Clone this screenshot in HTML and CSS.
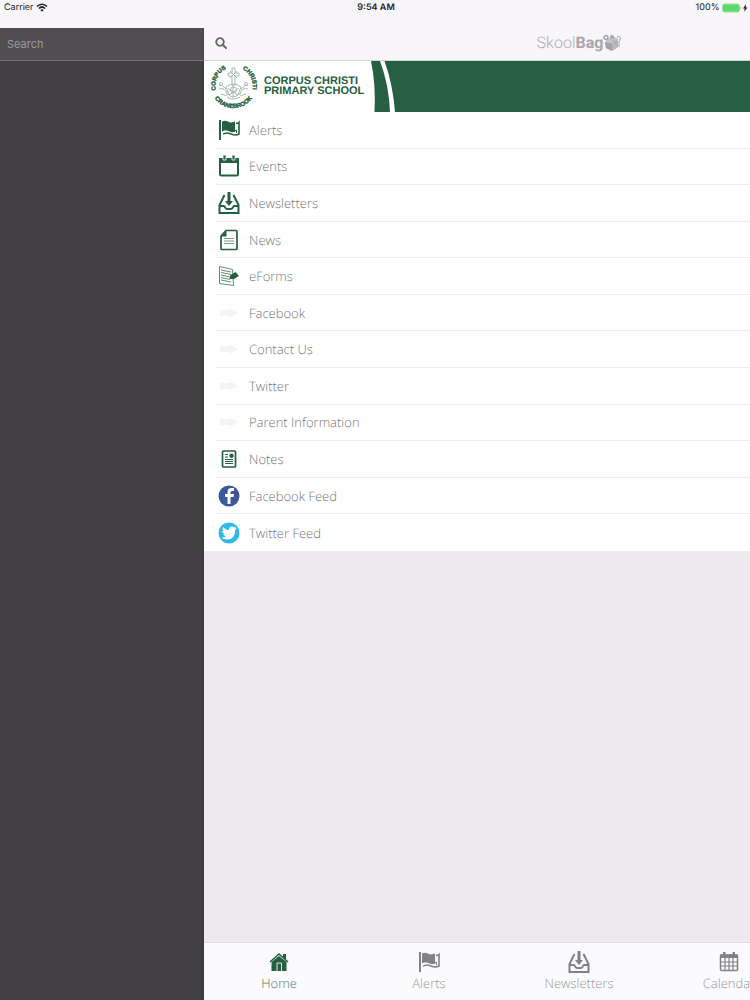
FILE: index.html
```html
<!DOCTYPE html>
<html lang="en">
<head>
    <meta charset="utf-8">
    <meta name="viewport" content="width=device-width, initial-scale=1">
    <title>SkoolBag</title>
    <link rel="stylesheet" href="styles.css">
</head>
<body>
<!-- shared icons -->
<svg class="sprite" aria-hidden="true">
    <symbol id="flag" viewBox="0 0 22 22">
        <path d="M1 1h2v20H1z" fill="currentColor"/>
        <path d="M4 2.500c4-2 6 1 9 1 2 0 3-1 4-1v10c-4 2-6-1-9-1-2 0-3 0-4 1z" fill="currentColor"/>
        <path d="M18 4.500c1 0 2 0 3-1v11.500c-5 3-8-1-12-1-2 0-3 1-4 1" fill="none" stroke="currentColor" stroke-width="1.600"/>
        <path d="M16 12.500 18.500 11v3" fill="none" stroke="currentColor"/>
    </symbol>
    <symbol id="tray" viewBox="0 0 22 22">
        <path d="M6.500 3 1.500 13v8h19v-8l-5-10M1.500 14H6c1 0 1 3 3 3h4c2 0 2-3 3-3h4.500" fill="none" stroke="currentColor" stroke-width="2"/>
        <path d="M9.500 0h3v9H15l-4 5-4-5h2.500z" fill="currentColor"/>
    </symbol>
    <symbol id="arrow" viewBox="0 0 22 22">
        <path d="M2 8h10V6l8 5-8 5v-2H2z" fill="currentColor"/>
    </symbol>
</svg>

<header class="status">
    <span class="carrier">Carrier
        <svg width="12" height="9" viewBox="0 0 12 9" aria-hidden="true"><path d="M1 3.500c3-3 7-3 10 0M3 5.500c2-2 4-2 6 0" fill="none" stroke="#222" stroke-width="1.700"/><path d="M4.300 7 6 8.800 7.700 7Q6 5.500 4.300 7z" fill="#222"/></svg>
    </span>
    <time class="clock">9:54 AM</time>
    <span class="power">100%
        <svg width="26" height="10" viewBox="0 0 26 10" aria-hidden="true"><rect x="0.500" y="1" width="17" height="8" rx="2" fill="#5fd86c" stroke="#9be3a4"/><path d="M18.500 3.500q2 1.500 0 3z" fill="#999"/><path d="M24 1 21 5.500h1.800L22 9l3.500-4.500h-1.800z" fill="#222"/></svg>
    </span>
</header>

<div class="app">
    <aside class="drawer">
        <input class="search" type="search" placeholder="Search" aria-label="Search">
    </aside>

    <div class="pane">
        <div class="navbar">
            <button class="find" type="button" aria-label="Search">
                <svg width="12" height="12" viewBox="0 0 12 12" aria-hidden="true"><circle cx="5" cy="5" r="3.800" fill="none" stroke="#666" stroke-width="1.800"/><path d="m8 8 3 3" stroke="#666" stroke-width="2" stroke-linecap="round"/></svg>
            </button>
            <div class="brand">
                <span>Skool<b>Bag</b></span>
                <svg width="18" height="18" viewBox="0 0 18 18" aria-hidden="true">
                    <path d="m3 6 7-4 5 3v8l-6 4-6-3z" fill="#c5c4c6"/>
                    <path d="m1.500 8 7.500 1.500v7.500l-6-3z" fill="#a3a2a5"/>
                    <path d="m9 9 6-4v8l-6 4z" fill="#b9b8bb"/>
                    <path d="M14 3c4-2 4 2 2 5v5M5 12h4M10 6l4 5" fill="none" stroke="#a5a4a7"/>
                    <circle cx="3" cy="3.500" r="2" fill="#eee" stroke="#a5a4a7" stroke-width="1.400"/>
                    <circle cx="9" cy="3" r="2" fill="#aaa9ac"/>
                </svg>
            </div>
        </div>

        <div class="banner">
            <svg class="crest" width="50" height="50" viewBox="0 0 50 50" role="img" aria-label="Corpus Christi Cranebrook">
                <defs>
                    <path id="ring-left" d="M18 42.500a19 19 0 0 1 5-36.400"/>
                    <path id="ring-right" d="M27 6.100a19 19 0 0 1 5 36.400"/>
                    <path id="ring-low" d="M1.500 24a23 23 0 0 0 46 0"/>
                </defs>
                <text><textPath href="#ring-left" startOffset="62%" text-anchor="middle">CORPUS</textPath></text>
                <text><textPath href="#ring-right" startOffset="38%" text-anchor="middle">CHRISTI</textPath></text>
                <text><textPath href="#ring-low" startOffset="50%" text-anchor="middle">CRANEBROOK</textPath></text>
                <g fill="none" stroke="#9fb2a8" stroke-width=".9">
                    <path d="M23 7h3v5h4v3h-4v9h-3v-9h-4v-3h4zM21 10l7 7M28 10l-7 7"/>
                    <path d="M17 26q7-6 15 0l-3 8q-5 4-9 0zM19 27l10 7M30 27l-10 7M24 24v12M10 24q4 0 7 4M39 24q-4 0-7 4M10 28q6-2 8 5M39 28q-6-2-8 5M12 33q5 3 8 0M37 33q-5 3-8 0M18 36q6 4 13 0"/>
                    <circle cx="12" cy="23" r="1.500"/><circle cx="37" cy="23" r="1.500"/><circle cx="24.500" cy="29" r="3"/>
                </g>
            </svg>
            <h1 class="school">Corpus Christi<br>Primary School</h1>
            <svg class="swoosh" width="28" height="51" viewBox="0 0 28 51" aria-hidden="true">
                <path d="M0 0h28v51H3.500Q5 24 0 0z" fill="#265f41"/>
                <path d="M9 0h4.500Q22 24 24 51h-5Q18 24 9 0z" fill="#fff"/>
            </svg>
            <div class="stripe"></div>
        </div>

        <ul class="menu">
            <li><a href="#alerts"><svg class="icon"><use href="#flag"/></svg>Alerts</a></li>
            <li><a href="#events">
                <svg class="icon" viewBox="0 0 22 22"><rect x="2" y="4" width="18" height="16.500" rx="1.500" fill="none" stroke="currentColor" stroke-width="2"/><path d="M1 3h20v5H1z" fill="currentColor"/><path d="M5 0v5h3V0zM14 0v5h3V0z" fill="currentColor" stroke="#fff" stroke-width=".8"/></svg>Events</a></li>
            <li><a href="#newsletters"><svg class="icon"><use href="#tray"/></svg>Newsletters</a></li>
            <li><a href="#news">
                <svg class="icon" viewBox="0 0 22 22"><path d="M8 1.500h10q1 0 1 1v17q0 1-1 1H4q-1 0-1-1V7z" fill="none" stroke="currentColor" stroke-width="1.700"/><path d="M3 7.500 8.500 2v5.500z" fill="currentColor"/><path d="M6 9.500h10M6 12h10M6 14.500h10" stroke="currentColor" opacity=".6"/></svg>News</a></li>
            <li><a href="#eforms">
                <svg class="icon" viewBox="0 0 22 22"><path d="m1.500 1.500 13 3 1 16-14-2z" fill="#fff" stroke="currentColor" opacity=".7"/><path d="m3 5 10 2M3 7.500l10 2M3 10l9 2M3 12.500l9 2M3 15l10 2" stroke="currentColor" opacity=".7"/><path d="m11.500 14 1-4 5-3 3.500 4-5 3z" fill="currentColor"/></svg>eForms</a></li>
            <li><a href="#facebook"><svg class="icon faint"><use href="#arrow"/></svg>Facebook</a></li>
            <li><a href="#contact"><svg class="icon faint"><use href="#arrow"/></svg>Contact Us</a></li>
            <li><a href="#twitter"><svg class="icon faint"><use href="#arrow"/></svg>Twitter</a></li>
            <li><a href="#parents"><svg class="icon faint"><use href="#arrow"/></svg>Parent Information</a></li>
            <li><a href="#notes">
                <svg class="icon" viewBox="0 0 22 22"><rect x="4.500" y="3" width="13" height="16" rx="1" fill="none" stroke="currentColor" stroke-width="1.700"/><path d="M7 6.500h3M7 9h3M7 11.500h8M7 13.500h8M7 15.500h8" stroke="currentColor" stroke-width="1.200"/><circle cx="13.500" cy="7.800" r="2.200" fill="currentColor"/></svg>Notes</a></li>
            <li><a href="#facebook-feed">
                <svg class="icon" viewBox="0 0 22 22"><circle cx="11" cy="11" r="10.500" fill="#3d579d"/><path d="M9.500 19v-7H7V9h2.500V7q0-4 4-4H16v3h-2q-1.500 0-1.500 1.500V9H16l-.5 3h-3v7z" fill="#fff"/></svg>Facebook Feed</a></li>
            <li><a href="#twitter-feed">
                <svg class="icon" viewBox="0 0 22 22"><circle cx="11" cy="11" r="10.500" fill="#2fb9e8"/><path d="M3.500 15.500q3 0 4.500-1.200-2.200-.3-2.800-2.300h1.400q-2.500-1-2.500-3.300l1.300.5Q3.600 7.300 4.800 5q2.700 3 6 3.200Q10.700 4.500 14 4.500q1.500 0 2.300 1l2-.8-1.200 1.800 1.700-.4-1.600 1.800Q17.300 17.500 9 17.500q-3.500 0-5.500-2z" fill="#fff"/></svg>Twitter Feed</a></li>
        </ul>

        <nav class="tabs">
            <a class="tab active" href="#home">
                <svg class="icon" viewBox="0 0 22 22"><path d="M3.500 11 11 5l7.500 6v9h-15z" fill="currentColor"/><path d="m2 11 9-8 9 8" fill="none" stroke="currentColor" stroke-width="1.600"/><path d="M15 3h3v5.500l-3-2.500z" fill="currentColor"/><path d="M9 20v-8h4.500v8" fill="none" stroke="#dce8e2"/></svg>
                Home
            </a>
            <a class="tab" href="#alerts"><svg class="icon"><use href="#flag"/></svg>Alerts</a>
            <a class="tab" href="#newsletters"><svg class="icon"><use href="#tray"/></svg>Newsletters</a>
            <a class="tab" href="#calendar">
                <svg class="icon" viewBox="0 0 22 22"><rect x="2.500" y="4" width="17" height="15.500" rx="1" fill="none" stroke="currentColor" stroke-width="1.500"/><path d="M2 3.500h18v3.500H2zM5 1h2.500v4H5zM14.500 1H17v4h-2.500z" fill="currentColor"/><path d="M7 7v12M11 7v12M15 7v12M3 11h16M3 15h16" stroke="currentColor" stroke-width="1.200"/></svg>
                Calendar
            </a>
        </nav>
    </div>
</div>
</body>
</html>
```
FILE: styles.css
```css
* {
    box-sizing: border-box;
}

body {
    display: flex;
    flex-direction: column;
    height: 100vh;
    margin: 0;
    overflow: hidden;
    font-family: "Open Sans", "Noto Sans", sans-serif;
    font-size: 13px;
    font-weight: 300;
    color: #77767a;
    background-color: #f8f6f9;
    text-rendering: geometricPrecision;
}

a {
    color: inherit;
    text-decoration: none;
}

.sprite {
    display: none;
}

.status {
    display: grid;
    grid-template-columns: 1fr auto 1fr;
    flex: none;
    height: 28px;
    padding: 0 2px 0 4px;
    font-family: Inter, "Liberation Sans", sans-serif;
    font-size: 9px;
    font-weight: 400;
    line-height: 15px;
    color: #222;
}

.status svg {
    vertical-align: middle;
}

.clock {
    font-weight: 600;
}

.power {
    text-align: right;
}

.app {
    display: flex;
    flex: 1;
    min-height: 0;
}

/* the pane keeps the full screen width and slides out to the right */
.drawer {
    flex: none;
    width: 204px;
    background-color: #424043;
}

.search {
    display: block;
    width: 100%;
    height: 33px;
    margin: 0;
    padding: 0 7px;
    border: 0;
    border-bottom: 1px solid #777579;
    border-radius: 0;
    outline: 0;
    font-family: Inter, "Liberation Sans", sans-serif;
    font-size: 11px;
    color: #fff;
    background-color: #504e51;
    -webkit-appearance: none;
    appearance: none;
}

.search::placeholder {
    color: #9b999d;
}

.pane {
    display: flex;
    flex-direction: column;
    flex: none;
    width: 100%;
    background-color: #eeebee;
    box-shadow: 0 0 2px #333;
    clip-path: inset(0 0 0 -3px);
}

.navbar {
    display: grid;
    grid-template-columns: 1fr auto 1fr;
    align-items: center;
    flex: none;
    height: 33px;
    padding: 0 11px 2px;
    border-bottom: 1px solid #d5d2d6;
    background-color: #f8f6f9;
}

.find {
    display: flex;
    justify-self: start;
    padding: 0;
    border: 0;
    background: none;
}

.brand {
    display: flex;
    align-items: center;
    font-family: Roboto, sans-serif;
    font-size: 16px;
    line-height: 20px;
    color: #b1b0b3;
}

.brand b {
    font-weight: 700;
    color: #a8a7aa;
}

.banner {
    display: flex;
    flex: none;
    height: 51px;
    padding-left: 5px;
    background-color: #fff;
}

.crest {
    flex: none;
}

.crest text {
    font-family: "Liberation Sans", Arial, sans-serif;
    font-size: 6px;
    font-weight: 700;
    fill: #265f41;
    stroke: #265f41;
    stroke-width: 0.4;
}

.school {
    flex: none;
    width: 112px;
    margin: 0;
    padding: 15px 0 0 5px;
    font-family: "Liberation Sans", Arial, sans-serif;
    font-size: 11px;
    font-weight: 700;
    line-height: 10px;
    text-transform: uppercase;
    white-space: nowrap;
    color: #265f41;
}

.swoosh {
    flex: none;
}

.stripe {
    flex: 1;
    background-color: #265f41;
}

.menu {
    display: grid;
    grid-auto-rows: 1fr;
    flex: none;
    min-height: 439px;
    margin: 0;
    padding: 0 0 0 12px;
    list-style: none;
    background-color: #fff;
}

.menu li {
    border-bottom: 1px solid #edebee;
}

.menu li:last-child {
    border-bottom: 0;
}

.menu a {
    display: flex;
    align-items: center;
    gap: 9px;
    height: 100%;
    padding-left: 2px;
}

.icon {
    flex: none;
    width: 22px;
    height: 22px;
}

.menu .icon {
    color: #265f41;
}

.menu .faint {
    color: #f4f3f5;
}

.tabs {
    display: flex;
    flex: none;
    height: 58px;
    margin-top: auto;
    border-top: 1px solid #e0dee1;
    background-color: #fbfbfd;
}

.tab {
    display: flex;
    flex-direction: column;
    align-items: center;
    flex: 0 0 20%;
    padding-top: 8px;
    line-height: 20px;
    color: #9a999c;
}

.tab .icon {
    color: #828184;
}

.active {
    color: #5f7a6d;
}

.active .icon {
    color: #265f41;
}
```
